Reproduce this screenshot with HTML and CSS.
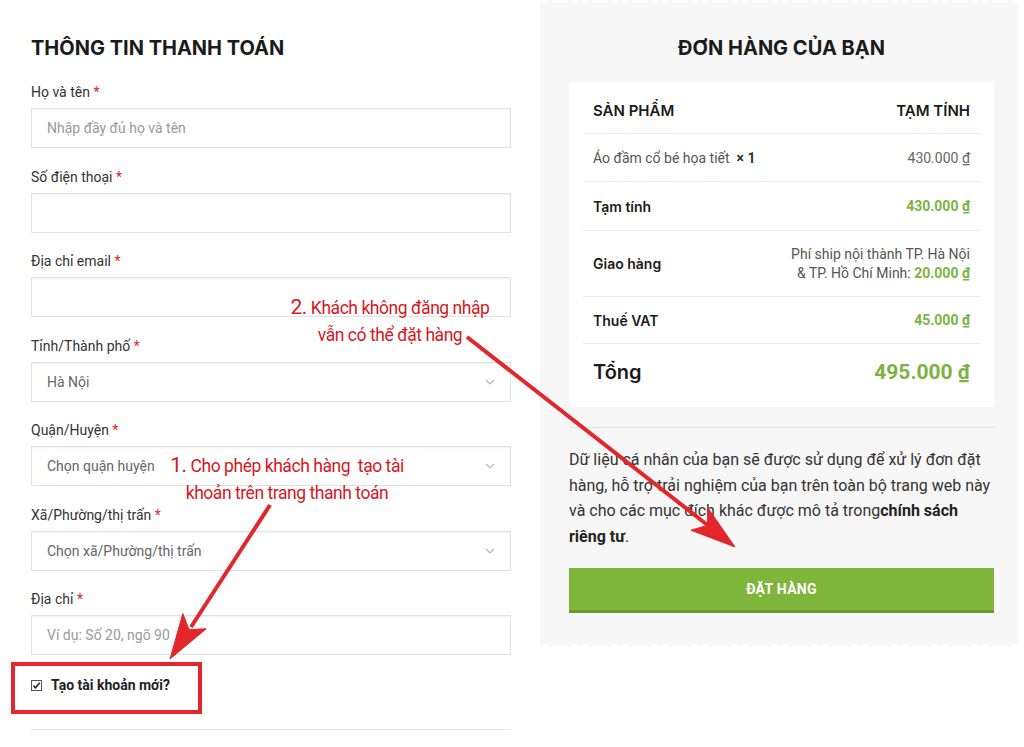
FILE: index.html
```html
<!DOCTYPE html>
<html lang="vi">
<head>
  <meta charset="UTF-8" />
  <meta name="viewport" content="width=device-width, initial-scale=1.0"/>
  <title>Thanh toán</title>
  <link rel="stylesheet" href="styles.css">
</head>
<body>
  <div class="page">
    <section class="billing">
      <h2 class="section-title">THÔNG TIN THANH TOÁN</h2>

      <div class="field">
        <label>Họ và tên <span class="req">*</span></label>
        <input class="input" type="text" placeholder="Nhập đầy đủ họ và tên" />
      </div>
      <div class="field">
        <label>Số điện thoại <span class="req">*</span></label>
        <input class="input" type="text" />
      </div>
      <div class="field">
        <label>Địa chỉ email <span class="req">*</span></label>
        <input class="input" type="email" />
      </div>
      <div class="field">
        <label>Tỉnh/Thành phố <span class="req">*</span></label>
        <div class="input select">
          <span class="value">Hà Nội</span>
          <svg class="chevron" width="10" height="6" viewBox="0 0 10 6"><path d="M1 1l4 4 4-4" fill="none" stroke="#b5b5b5" stroke-width="1.2"/></svg>
        </div>
      </div>
      <div class="field">
        <label>Quận/Huyện <span class="req">*</span></label>
        <div class="input select">
          <span class="value">Chọn quận huyện</span>
          <svg class="chevron" width="10" height="6" viewBox="0 0 10 6"><path d="M1 1l4 4 4-4" fill="none" stroke="#b5b5b5" stroke-width="1.2"/></svg>
        </div>
      </div>
      <div class="field">
        <label>Xã/Phường/thị trấn <span class="req">*</span></label>
        <div class="input select">
          <span class="value">Chọn xã/Phường/thị trấn</span>
          <svg class="chevron" width="10" height="6" viewBox="0 0 10 6"><path d="M1 1l4 4 4-4" fill="none" stroke="#b5b5b5" stroke-width="1.2"/></svg>
        </div>
      </div>
      <div class="field last">
        <label>Địa chỉ <span class="req">*</span></label>
        <input class="input" type="text" placeholder="Ví dụ: Số 20, ngõ 90" />
      </div>

      <label class="check">
        <svg class="box" width="11" height="11" viewBox="0 0 11 11">
          <rect x="0.5" y="0.5" width="10" height="10" fill="#fff" stroke="#555"/>
          <path d="M2.4 5.6l2.1 2.2 4.2-5" fill="none" stroke="#222" stroke-width="1.5"/>
        </svg>
        Tạo tài khoản mới?
      </label>
      <hr class="divider" />
    </section>

    <aside class="order">
      <h2 class="section-title">ĐƠN HÀNG CỦA BẠN</h2>

      <div class="summary">
        <div class="row head">
          <span>SẢN PHẨM</span>
          <span>TẠM TÍNH</span>
        </div>
        <div class="row item">
          <span class="product">Áo đầm cổ bé họa tiết&nbsp; <strong>× 1</strong></span>
          <span class="price">430.000 ₫</span>
        </div>
        <div class="row subtotal">
          <span class="name">Tạm tính</span>
          <span class="amount">430.000 ₫</span>
        </div>
        <div class="row shipping">
          <span class="name">Giao hàng</span>
          <span class="ship-info">Phí ship nội thành TP. Hà Nội<br>&amp; TP. Hồ Chí Minh: <span class="amount">20.000 ₫</span></span>
        </div>
        <div class="row vat">
          <span class="name">Thuế VAT</span>
          <span class="amount">45.000 ₫</span>
        </div>
        <div class="row total">
          <span class="name">Tổng</span>
          <span class="amount">495.000 ₫</span>
        </div>
      </div>

      <hr class="order-divider" />
      <p class="privacy">Dữ liệu cá nhân của bạn sẽ được sử dụng để xử lý đơn đặt hàng, hỗ trợ trải nghiệm của bạn trên toàn bộ trang web này và cho các mục đích khác được mô tả trong<strong>chính sách riêng tư</strong>.</p>
      <button class="place-order" type="button">ĐẶT HÀNG</button>
    </aside>

    <!-- red annotations drawn over the form -->
    <svg class="marks" width="1024" height="747" viewBox="0 0 1024 747">
      <g stroke="#e2262c" fill="#e2262c">
        <line x1="467" y1="337" x2="710" y2="527" stroke-width="4"/>
        <polygon points="735,547 690.9,530.2 707.4,525.4 708.1,508.2" stroke-width="1"/>
        <line x1="270" y1="505" x2="191" y2="627" stroke-width="4"/>
        <polygon points="170,659 182.8,613.6 189,629.6 206.2,628.8" stroke-width="1"/>
        <rect x="13" y="664" width="187" height="48" fill="none" stroke-width="4"/>
      </g>
    </svg>
    <div class="note note-guest"><span class="num">2.</span> Khách không đăng nhập<br>vẫn có thể đặt hàng</div>
    <div class="note note-account"><span class="num">1.</span> Cho phép khách hàng&nbsp; tạo tài<br>khoản trên trang thanh toán</div>
  </div>
</body>
</html>
```

FILE: styles.css
```css
:root {
  --text: #333;
  --muted: #555;
  --border: #e1e1e1;
  --panel: #f7f7f7;
  --green: #7cb342;
  --red: #d9161d;
}

body {
  margin: 0;
  font-family: Roboto, "Noto Sans", sans-serif;
  color: var(--text);
  background: #fff;
}

.page {
  position: relative;
  display: flex;
  align-items: flex-start;
  width: 1024px;
  height: 747px;
  overflow: hidden;
}

.section-title {
  margin: 0 0 22px;
  font-family: Inter, "Noto Sans", sans-serif;
  font-size: 20px;
  line-height: 24px;
  font-weight: 700;
  color: #1b1b1b;
}

/* billing form */
.billing {
  width: 480px;
  margin-left: 31px;
  padding-top: 36px;
}

.field {
  margin-bottom: 18.5px;
}

.field.last {
  margin-bottom: 0;
}

.field label {
  display: block;
  font-size: 14px;
  line-height: 20px;
  margin-bottom: 6px;
  color: var(--text);
}

.req {
  color: #e3232e;
}

.input {
  box-sizing: border-box;
  display: block;
  width: 100%;
  height: 40px;
  margin: 0;
  padding: 0 15px;
  border: 1px solid var(--border);
  border-radius: 0;
  box-shadow: inset 0 1px 2px rgba(0, 0, 0, 0.06);
  background: #fff;
  font-family: Roboto, sans-serif;
  font-size: 14px;
  color: var(--muted);
}

.input::placeholder {
  color: #9a9a9a;
}

.select {
  display: flex;
  align-items: center;
  justify-content: space-between;
}

.select .value {
  color: #666;
}

.check {
  display: flex;
  align-items: center;
  gap: 9px;
  margin-top: 20px;
  font-size: 14px;
  line-height: 20px;
  font-weight: 700;
  color: #222;
}

.divider {
  margin: 34px 0 0;
  border: 0;
  border-top: 1px solid #e6e6e6;
}

/* order panel */
.order {
  position: relative;
  width: 425px;
  margin-left: 29px;
  padding: 36px 24px 34px 29px;
  background: var(--panel);
}

.order::before,
.order::after {
  content: "";
  position: absolute;
  left: 0;
  right: 0;
  height: 5px;
  background-size: 10px 5px;
  background-repeat: repeat-x;
}

.order::before {
  top: 0;
  background-image: radial-gradient(circle at 50% -1px, #fff 4px, transparent 4.5px);
}

.order::after {
  bottom: 0;
  background-image: radial-gradient(circle at 50% 6px, #fff 4px, transparent 4.5px);
}

.order .section-title {
  text-align: center;
}

.summary {
  background: #fff;
  padding: 5px 14px 7px;
}

.row {
  box-sizing: border-box;
  display: flex;
  justify-content: space-between;
  align-items: center;
  padding: 0 10px;
  border-bottom: 1px solid #ececec;
  font-size: 14px;
}

.row.head {
  height: 47px;
  font-family: Inter, sans-serif;
  font-size: 15px;
  font-weight: 600;
  color: #1b1b1b;
}

.row.item { height: 48px; }
.row.subtotal { height: 49px; }
.row.shipping { height: 66px; }
.row.vat { height: 47px; }

.row.total {
  height: 56px;
  border-bottom: 0;
}

.product {
  color: var(--muted);
}

.product strong {
  color: #333;
}

.price {
  color: #666;
}

.name {
  font-family: Inter, sans-serif;
  font-weight: 600;
  color: #1b1b1b;
}

.amount {
  font-weight: 700;
  color: var(--green);
}

.ship-info {
  text-align: right;
  line-height: 19px;
  color: var(--muted);
}

.total .name {
  font-size: 20px;
}

.total .amount {
  font-size: 21px;
}

.order-divider {
  margin: 20px 0 0;
  border: 0;
  border-top: 1px solid #e3e3e3;
}

.privacy {
  margin: 19px 0 0;
  font-size: 16px;
  line-height: 25.5px;
  color: var(--text);
}

.privacy strong {
  color: #222;
}

.place-order {
  display: block;
  width: 100%;
  height: 45px;
  margin-top: 19px;
  border: 0;
  border-bottom: 3px solid #6a9a2e;
  background: #80b53b;
  color: #fff;
  font-family: Roboto, sans-serif;
  font-size: 14px;
  font-weight: 700;
  letter-spacing: 0.3px;
}

/* annotations */
.marks {
  position: absolute;
  top: 0;
  left: 0;
  pointer-events: none;
}

.note {
  position: absolute;
  text-align: center;
  font-family: Roboto, sans-serif;
  font-size: 17.5px;
  line-height: 27px;
  letter-spacing: -0.45px;
  color: var(--red);
  white-space: nowrap;
}

.note .num {
  font-size: 21px;
}

.note-guest {
  left: 270px;
  top: 294px;
  width: 240px;
}

.note-account {
  left: 157px;
  top: 452px;
  width: 260px;
}
```
